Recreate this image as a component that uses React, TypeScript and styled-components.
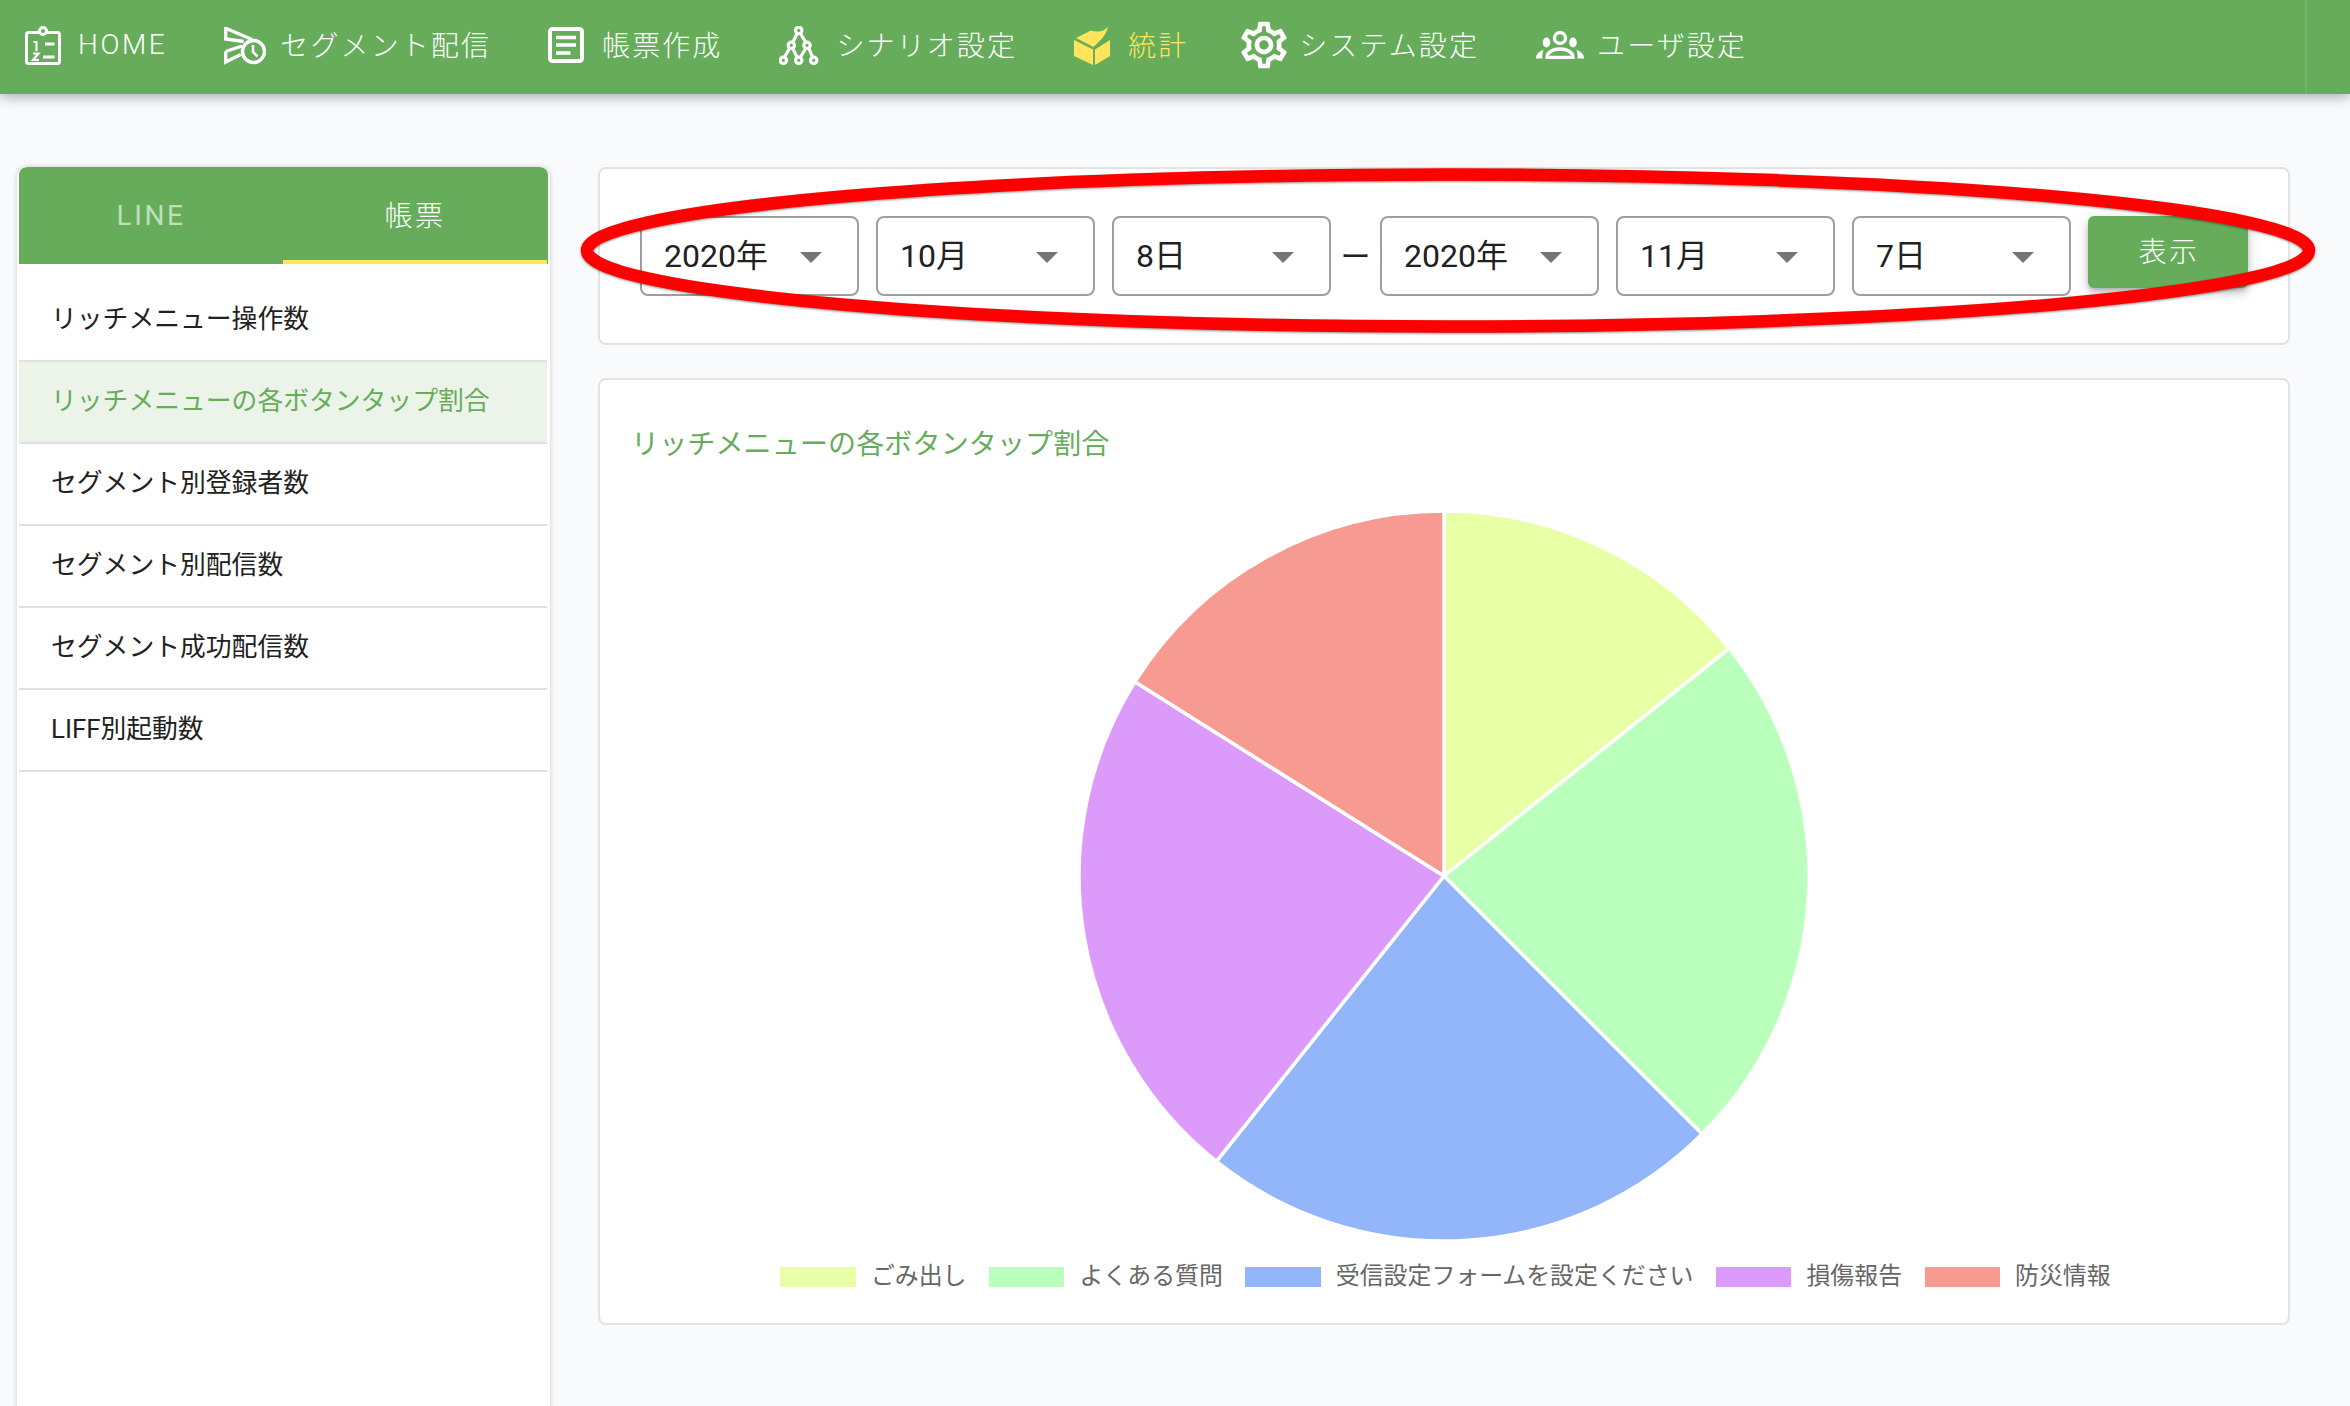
import React from 'react';
import styled, { createGlobalStyle } from 'styled-components';
import { MdOutlineSettings } from 'react-icons/md';

const FONT = `Roboto, "Noto Sans CJK JP", "Noto Sans", sans-serif`;
const GREEN = '#66ac5b';
const YELLOW = '#ffe55c';

const Global = createGlobalStyle`
  html, body { margin: 0; padding: 0; background: #f9fafc; font-family: ${FONT}; }
  * { box-sizing: border-box; }
`;

const Page = styled.div`
  height: 1406px;
  display: flex;
  flex-direction: column;
  overflow: hidden;
  background: #f9fafc;
`;

const Header = styled.header`
  position: relative;
  z-index: 2;
  flex: none;
  height: 94px;
  display: flex;
  align-items: stretch;
  padding-left: 25px;
  background: ${GREEN};
  box-shadow: 0 3px 12px rgba(0, 0, 0, 0.32);
`;

const Nav = styled.nav`
  display: flex;
  align-items: center;
  gap: 57px;
  height: 90px;
`;

const NavItem = styled.a<{ $active?: boolean; $gap?: number; $spacing?: number }>`
  display: flex;
  align-items: center;
  gap: ${(p) => p.$gap ?? 18}px;
  color: ${(p) => (p.$active ? YELLOW : '#fff')};
  font-size: 28px;
  font-weight: 300;
  letter-spacing: ${(p) => p.$spacing ?? 2.1}px;
  white-space: nowrap;
`;

const NavLabel = styled.span`
  padding-bottom: 2px;
`;

const NavIcon = styled.svg`
  display: block;
  flex: none;
`;

const GearWrap = styled.span`
  display: flex;
  justify-content: center;
  align-items: center;
  flex: none;
  width: 38px;
  height: 46px;
  color: #fff;

  svg {
    flex: none;
  }
`;

const HeaderDivider = styled.div`
  margin-left: auto;
  margin-right: 43px;
  width: 2px;
  background: #75b46b;
`;

const Main = styled.main`
  flex: 1;
  min-height: 0;
  display: flex;
  align-items: stretch;
  padding: 73px 59px 0 17px;
  gap: 48px;
`;

const Sidebar = styled.aside`
  flex: none;
  width: 533px;
  margin-bottom: -20px;
  padding: 0 2px;
  background: #fff;
  border-radius: 10px;
  box-shadow: 0 0 5px rgba(0, 0, 0, 0.2);
  overflow: hidden;
`;

const Tabs = styled.div`
  display: flex;
  height: 97px;
  background: ${GREEN};
  border-radius: 8px 8px 0 0;
`;

const Tab = styled.div<{ $active?: boolean }>`
  flex: none;
  width: 264px;
  display: flex;
  align-items: center;
  justify-content: center;
  padding-top: ${(p) => (p.$active ? 0 : 3)}px;
  color: ${(p) => (p.$active ? '#fff' : 'rgba(255,255,255,0.6)')};
  font-size: 28px;
  font-weight: ${(p) => (p.$active ? 300 : 400)};
  letter-spacing: 2.6px;
  border-bottom: 4px solid ${(p) => (p.$active ? YELLOW : 'transparent')};
`;

const MenuList = styled.ul`
  list-style: none;
  margin: 0;
  padding: 16px 0 0;
  width: 528px;
`;

const MenuRow = styled.li<{ $active?: boolean }>`
  height: 82px;
  display: flex;
  align-items: center;
  padding: 0 0 7px 32px;
  border-bottom: 2px solid #e0e0e0;
  font-size: 25.8px;
  color: ${(p) => (p.$active ? GREEN : '#212121')};
  background: ${(p) => (p.$active ? '#ecf4ea' : 'transparent')};
`;

const Content = styled.div`
  flex: none;
  width: 1692px;
  display: flex;
  flex-direction: column;
  gap: 33px;
`;

const Card = styled.section`
  position: relative;
  background: #fff;
  border: 2px solid #e2e2e2;
  border-radius: 8px;
`;

const FilterCard = styled(Card)`
  height: 178px;
  padding: 47px 0 0 40px;
  display: flex;
  align-items: flex-start;
`;

const DateGroup = styled.div`
  display: flex;
  gap: 17px;
`;

const SelectBox = styled.div`
  width: 219px;
  height: 80px;
  display: flex;
  align-items: center;
  justify-content: space-between;
  padding: 0 35px 0 22px;
  border: 2px solid #9e9e9e;
  border-radius: 8px;
  background: #fff;
  color: #212121;
  font-size: 32px;
`;

const SelectValue = styled.span`
  padding-bottom: 7px;
`;

const Caret = styled.svg`
  display: block;
  flex: none;
  margin-top: 3px;
`;

const Dash = styled.div`
  flex: none;
  width: 49px;
  height: 80px;
  display: flex;
  align-items: center;
  justify-content: center;
  padding-bottom: 5px;
  font-size: 30px;
  color: #212121;
`;

const ShowButton = styled.button`
  flex: none;
  width: 160px;
  height: 72px;
  margin-left: 16.5px;
  padding: 0 0 4px 3px;
  border: none;
  border-radius: 6px;
  background: ${GREEN};
  color: #fff;
  font-family: ${FONT};
  font-size: 28px;
  font-weight: 300;
  letter-spacing: 2.6px;
  box-shadow: 0 3px 5px -1px rgba(0, 0, 0, 0.2), 0 6px 10px 0 rgba(0, 0, 0, 0.14), 0 1px 18px 0 rgba(0, 0, 0, 0.08);
`;

const Annotation = styled.svg`
  position: absolute;
  left: -19px;
  top: -1px;
  overflow: visible;
  pointer-events: none;
  filter: drop-shadow(0 1px 1px rgba(0, 0, 0, 0.45));
`;

const ChartCard = styled(Card)`
  height: 947px;
  padding: 47px 0 0 31px;
  display: flex;
  flex-direction: column;
`;

const ChartTitle = styled.h2`
  margin: 0;
  font-size: 28px;
  line-height: 36px;
  font-weight: 400;
  letter-spacing: 0.15px;
  color: ${GREEN};
`;

const PieWrap = styled.div`
  margin: 43px 0 0 -31px;
  display: flex;
  justify-content: center;
`;

const PieSvg = styled.svg`
  display: block;
`;

const Legend = styled.ul`
  list-style: none;
  margin: 21px 0 0 -31px;
  padding: 0 0 0 3px;
  display: flex;
  justify-content: center;
  gap: 22.5px;
`;

const LegendItem = styled.li`
  display: flex;
  align-items: center;
  gap: 15px;
  height: 20px;
  font-size: 23.9px;
  color: #666;
  white-space: nowrap;
`;

const LegendLabel = styled.span`
  padding-bottom: 7px;
`;

const Swatch = styled.span<{ $color: string }>`
  display: block;
  width: 75.5px;
  height: 20px;
  background: ${(p) => p.$color};
`;

const HomeIcon = () => (
  <NavIcon width="36" height="39" viewBox="0 0 36 39" fill="none" stroke="#fff">
    <rect x="1.5" y="6.5" width="33" height="31" rx="2" strokeWidth="3" />
    <circle cx="18" cy="5" r="3.5" strokeWidth="3" fill="#66ac5b" />
    <path d="M8.5 16h3v9" strokeWidth="2.2" />
    <path d="M20 18h9.5M18 31h11.5" strokeWidth="3.2" />
    <path d="M8 27.5h5.5L8 34h6" strokeWidth="2.2" />
  </NavIcon>
);

const SegmentIcon = () => (
  <NavIcon width="42" height="39" viewBox="0 0 42 39" fill="none" stroke="#fff" strokeWidth="3.4">
    <path d="M1.7 2.2 28 13.5M1.7 1v12l18 2.5" />
    <path d="M1.7 25.5V36l15-7.5M1.7 25.5 18 20" />
    <circle cx="29.5" cy="25.5" r="11" />
    <path d="M29 19v7l4.5 4.5" strokeWidth="2.6" />
  </NavIcon>
);

const DocIcon = () => (
  <NavIcon width="36" height="36" viewBox="0 0 36 36" fill="none" stroke="#fff">
    <rect x="2" y="2" width="32" height="32" rx="2.5" strokeWidth="4" />
    <path d="M8 10.5h20M8 18h20M8 26h14.5" strokeWidth="3.6" />
  </NavIcon>
);

const TreeIcon = () => (
  <NavIcon width="40" height="39" viewBox="0 0 40 39" fill="none" stroke="#fff" strokeWidth="3.2">
    <path d="M18 7.5 14 16M21.5 7.5 26.5 16M10.5 22.5 5.5 31M14 23 18 31M26.5 23 21.5 31M30 22.5 33.5 31" />
    <circle cx="19.7" cy="4.4" r="3.2" />
    <circle cx="12.3" cy="19.3" r="3.2" />
    <circle cx="28" cy="19.3" r="3.2" />
    <circle cx="4.4" cy="34.3" r="3.2" />
    <circle cx="19.7" cy="34.3" r="3.2" />
    <circle cx="34.7" cy="34.3" r="3.2" />
  </NavIcon>
);

const BoxIcon = () => (
  <NavIcon width="36" height="39" viewBox="0 0 36 39" fill={YELLOW}>
    <path d="M2 12 17 4.5C23 6.5 30 6 34 0.5 33 5 31 9 28 12.5L19.5 21Z" />
    <path d="M0 14 19 23.5V39L0 30Z" />
    <path d="M21 23.5 36 14V30L21 39Z" />
  </NavIcon>
);

const UsersIcon = () => (
  <NavIcon width="48" height="28" viewBox="0 0 48 28" fill="#fff">
    <circle cx="24" cy="7" r="5.5" fill="none" stroke="#fff" strokeWidth="3.4" />
    <ellipse cx="10.5" cy="11.5" rx="3.8" ry="5" />
    <ellipse cx="37" cy="11.5" rx="3.8" ry="5" />
    <path d="M0 27.5C0 23 3 20.5 7.5 19 6.5 22 6 25 6.5 27.5Z" />
    <path d="M48 27.5C48 23 45 20.5 40.5 19 41.5 22 42 25 41.5 27.5Z" />
    <path d="M11 26.5C11 21 17 18 24 18S37 21 37 26.5Z" fill="none" stroke="#fff" strokeWidth="3.4" />
  </NavIcon>
);

const GearIcon = () => (
  <GearWrap>
    <MdOutlineSettings size={56} />
  </GearWrap>
);

const navItems: { label: string; icon: React.ReactNode; gap?: number; spacing?: number; active?: boolean }[] = [
  { label: 'HOME', icon: <HomeIcon />, gap: 17, spacing: 2.6 },
  { label: 'セグメント配信', icon: <SegmentIcon />, gap: 14 },
  { label: '帳票作成', icon: <DocIcon /> },
  { label: 'シナリオ設定', icon: <TreeIcon />, gap: 17 },
  { label: '統計', icon: <BoxIcon />, active: true },
  { label: 'システム設定', icon: <GearIcon />, gap: 16 },
  { label: 'ユーザ設定', icon: <UsersIcon />, gap: 13 },
];

const menu = [
  'リッチメニュー操作数',
  'リッチメニューの各ボタンタップ割合',
  'セグメント別登録者数',
  'セグメント別配信数',
  'セグメント成功配信数',
  'LIFF別起動数',
];

const slices = [
  { label: 'ごみ出し', color: '#e9ffa6', angle: 51.43 },
  { label: 'よくある質問', color: '#baffbc', angle: 83.57 },
  { label: '受信設定フォームを設定ください', color: '#93b6fb', angle: 83.57 },
  { label: '損傷報告', color: '#dc9bfa', angle: 83.57 },
  { label: '防災情報', color: '#f79a92', angle: 57.86 },
];

const R = 365;
const C = 370;
const pt = (deg: number) => {
  const a = (deg * Math.PI) / 180;
  return `${(C + R * Math.sin(a)).toFixed(2)} ${(C - R * Math.cos(a)).toFixed(2)}`;
};

const Pie = () => {
  let start = 0;
  return (
    <PieSvg width="740" height="740" viewBox="0 0 740 740">
      {slices.map((s) => {
        const end = start + s.angle;
        const d = `M${C} ${C}L${pt(start)}A${R} ${R} 0 0 1 ${pt(end)}Z`;
        start = end;
        return <path key={s.label} d={d} fill={s.color} stroke="#fff" strokeWidth="3.5" strokeLinejoin="round" />;
      })}
    </PieSvg>
  );
};

const Select = ({ value }: { value: string }) => (
  <SelectBox>
    <SelectValue>{value}</SelectValue>
    <Caret width="22" height="11" viewBox="0 0 22 11" fill="#757575">
      <path d="M0 0h22L11 11z" />
    </Caret>
  </SelectBox>
);

export default function App() {
  return (
    <Page>
      <Global />
      <Header>
        <Nav>
          {navItems.map((n) => (
            <NavItem key={n.label} $active={n.active} $gap={n.gap} $spacing={n.spacing}>
              {n.icon}
              <NavLabel>{n.label}</NavLabel>
            </NavItem>
          ))}
        </Nav>
        <HeaderDivider />
      </Header>
      <Main>
        <Sidebar>
          <Tabs>
            <Tab>LINE</Tab>
            <Tab $active>帳票</Tab>
          </Tabs>
          <MenuList>
            {menu.map((m, i) => (
              <MenuRow key={m} $active={i === 1}>
                {m}
              </MenuRow>
            ))}
          </MenuList>
        </Sidebar>
        <Content>
          <FilterCard>
            <DateGroup>
              <Select value="2020年" />
              <Select value="10月" />
              <Select value="8日" />
            </DateGroup>
            <Dash>ー</Dash>
            <DateGroup>
              <Select value="2020年" />
              <Select value="11月" />
              <Select value="7日" />
            </DateGroup>
            <ShowButton>表示</ShowButton>
            <Annotation width="1734" height="165" viewBox="0 0 1734 165" fill="none">
              <ellipse cx="867" cy="82.5" rx="861" ry="76" stroke="#ff0000" strokeWidth="12.5" />
            </Annotation>
          </FilterCard>
          <ChartCard>
            <ChartTitle>リッチメニューの各ボタンタップ割合</ChartTitle>
            <PieWrap>
              <Pie />
            </PieWrap>
            <Legend>
              {slices.map((s) => (
                <LegendItem key={s.label}>
                  <Swatch $color={s.color} />
                  <LegendLabel>{s.label}</LegendLabel>
                </LegendItem>
              ))}
            </Legend>
          </ChartCard>
        </Content>
      </Main>
    </Page>
  );
}
